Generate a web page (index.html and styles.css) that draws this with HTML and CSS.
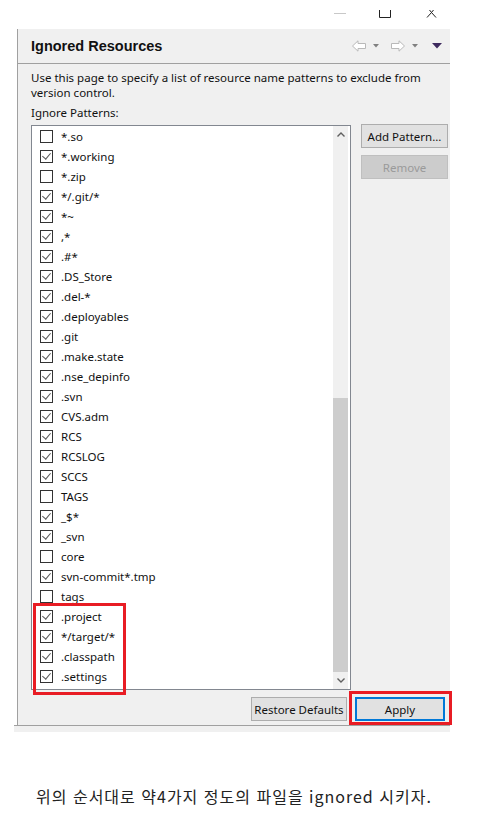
FILE: index.html
```html
<!DOCTYPE html>
<html lang="ko">
<head>
<meta charset="utf-8">
<title>Ignored Resources</title>
<link rel="stylesheet" href="styles.css">
</head>
<body>
<div class="titlebar">
  <svg class="winctl" width="120" height="29" viewBox="0 0 120 29">
    <line x1="0" y1="13.5" x2="12" y2="13.5" stroke="#c8c8c8" stroke-width="1"/>
    <polyline points="45.5,10 45.5,17.5 56.5,17.5 56.5,10" fill="none" stroke="#222" stroke-width="1"/>
    <path d="M93,17.5 L97.5,12.5 L102,17.5 M95.5,10 L97.5,12.5 L99.5,10" fill="none" stroke="#222" stroke-width="1"/>
  </svg>
</div>
<div class="page">
  <div class="panel">
    <div class="header">
      <h1 class="title">Ignored Resources</h1>
      <div class="nav">
        <svg width="14" height="12" viewBox="0 0 14 12"><path d="M0.5,6 L6,0.8 L6,3.5 L13.5,3.5 L13.5,8.5 L6,8.5 L6,11.2 Z" fill="#fff" stroke="#b9b9b9" stroke-width="1"/></svg>
        <svg class="tri" width="6" height="4" viewBox="0 0 6 4"><path d="M0,0 L6,0 L3,3.5 Z" fill="#808080"/></svg>
        <svg width="14" height="12" viewBox="0 0 14 12"><path d="M13.5,6 L8,0.8 L8,3.5 L0.5,3.5 L0.5,8.5 L8,8.5 L8,11.2 Z" fill="#fff" stroke="#b9b9b9" stroke-width="1"/></svg>
        <svg class="tri" width="6" height="4" viewBox="0 0 6 4"><path d="M0,0 L6,0 L3,3.5 Z" fill="#808080"/></svg>
        <svg class="tri big" width="10" height="6" viewBox="0 0 10 6"><path d="M0,0 L10,0 L5,5.5 Z" fill="#3d2a5e"/></svg>
      </div>
    </div>
    <div class="body">
      <p class="desc">Use this page to specify a list of resource name patterns to exclude from version control.</p>
      <div class="label">Ignore Patterns:</div>
      <div class="main">
        <div class="listbox">
          <div class="rows">
            <div class="row"><span class="cb"></span><span>*.so</span></div>
            <div class="row"><span class="cb on"></span><span>*.working</span></div>
            <div class="row"><span class="cb"></span><span>*.zip</span></div>
            <div class="row"><span class="cb on"></span><span>*/.git/*</span></div>
            <div class="row"><span class="cb on"></span><span>*~</span></div>
            <div class="row"><span class="cb on"></span><span>,*</span></div>
            <div class="row"><span class="cb on"></span><span>.#*</span></div>
            <div class="row"><span class="cb on"></span><span>.DS_Store</span></div>
            <div class="row"><span class="cb on"></span><span>.del-*</span></div>
            <div class="row"><span class="cb on"></span><span>.deployables</span></div>
            <div class="row"><span class="cb on"></span><span>.git</span></div>
            <div class="row"><span class="cb on"></span><span>.make.state</span></div>
            <div class="row"><span class="cb on"></span><span>.nse_depinfo</span></div>
            <div class="row"><span class="cb on"></span><span>.svn</span></div>
            <div class="row"><span class="cb on"></span><span>CVS.adm</span></div>
            <div class="row"><span class="cb on"></span><span>RCS</span></div>
            <div class="row"><span class="cb on"></span><span>RCSLOG</span></div>
            <div class="row"><span class="cb on"></span><span>SCCS</span></div>
            <div class="row"><span class="cb"></span><span>TAGS</span></div>
            <div class="row"><span class="cb on"></span><span>_$*</span></div>
            <div class="row"><span class="cb on"></span><span>_svn</span></div>
            <div class="row"><span class="cb"></span><span>core</span></div>
            <div class="row"><span class="cb on"></span><span>svn-commit*.tmp</span></div>
            <div class="row"><span class="cb"></span><span>tags</span></div>
            <div class="marked">
              <div class="row"><span class="cb on"></span><span>.project</span></div>
              <div class="row"><span class="cb on"></span><span>*/target/*</span></div>
              <div class="row"><span class="cb on"></span><span>.classpath</span></div>
              <div class="row"><span class="cb on"></span><span>.settings</span></div>
            </div>
          </div>
          <div class="scrollbar">
            <div class="sb-btn"><svg width="8" height="5" viewBox="0 0 8 5"><path d="M0.5,4.5 L4,1 L7.5,4.5" fill="none" stroke="#606060" stroke-width="1.4"/></svg></div>
            <div class="sb-track"><div class="sb-thumb"></div></div>
            <div class="sb-btn"><svg width="8" height="5" viewBox="0 0 8 5"><path d="M0.5,0.5 L4,4 L7.5,0.5" fill="none" stroke="#606060" stroke-width="1.4"/></svg></div>
          </div>
        </div>
        <div class="side">
          <button class="btn">Add Pattern...</button>
          <button class="btn" disabled>Remove</button>
        </div>
      </div>
      <div class="footer">
        <button class="btn restore">Restore Defaults</button>
        <div class="apply-wrap"><button class="btn apply">Apply</button></div>
      </div>
    </div>
  </div>
  <div class="band"></div>
</div>
<p class="caption">위의 순서대로 약4가지 정도의 파일을 ignored 시키자.</p>
</body>
</html>
```
FILE: styles.css
```css
* { box-sizing: border-box; }
html, body { margin: 0; padding: 0; background: #fff; }
body {
  width: 479px;
  font-family: "Noto Sans", "Noto Sans CJK KR", sans-serif;
  font-size: 11.5px;
  color: #000;
}
.titlebar {
  height: 29px;
  display: flex;
  justify-content: flex-end;
  padding-right: 25px;
}
.winctl { display: block; }
.page {
  padding-left: 14px;
  width: 450px;
}
.panel {
  margin-left: 3px;
  border-left: 1px solid #a0a0a0;
  background: #f0f0f0;
}
.header {
  height: 35px;
  border-bottom: 1px solid #a0a0a0;
  display: flex;
  align-items: center;
  justify-content: space-between;
  padding: 0 8px 0 13px;
}
.title {
  margin: 0;
  font-family: "Liberation Sans", sans-serif;
  font-size: 14.5px;
  font-weight: bold;
  color: #111;
}
.nav {
  display: flex;
  align-items: center;
  gap: 7px;
}
.nav svg { display: block; }
.nav .tri { margin-right: 5px; }
.nav .big { margin-right: 0; margin-left: 2px; }
.body {
  padding: 6px 2px 4px 13px;
}
.desc {
  margin: 0;
  line-height: 15px;
  color: #111;
}
.label {
  margin-top: 5px;
  line-height: 15px;
  color: #111;
}
.main {
  margin-top: 5px;
  display: flex;
  gap: 10px;
  align-items: flex-start;
}
.listbox {
  width: 320px;
  height: 565px;
  border: 1px solid #828790;
  background: #fff;
  display: flex;
}
.rows {
  flex: 1;
  padding-top: 0;
}
.row {
  height: 20px;
  display: flex;
  align-items: center;
  padding-left: 8px;
  gap: 8px;
  color: #111;
  white-space: nowrap;
}
.cb {
  width: 13px;
  height: 13px;
  border: 1px solid #333;
  background: #fff;
  flex: none;
  position: relative;
}
.cb.on::after {
  content: "";
  position: absolute;
  left: 3px;
  top: 0px;
  width: 4px;
  height: 7px;
  border-right: 1px solid #555;
  border-bottom: 1px solid #555;
  transform: rotate(40deg);
}
.marked {
  position: relative;
}
.marked::before {
  content: "";
  position: absolute;
  left: 1px;
  top: -3px;
  width: 87px;
  height: 86px;
  border: 3px solid #e81c24;
}
.scrollbar {
  width: 15px;
  margin-right: 2px;
  background: #f0f0f0;
  display: flex;
  flex-direction: column;
}
.sb-btn {
  height: 17px;
  display: flex;
  align-items: center;
  justify-content: center;
}
.sb-track {
  flex: 1;
  padding-top: 255px;
}
.sb-thumb {
  height: 274px;
  background: #cdcdcd;
}
.side {
  width: 87px;
  display: flex;
  flex-direction: column;
  gap: 7px;
  margin-top: -1px;
}
.btn {
  font-family: inherit;
  font-size: 11.5px;
  height: 24px;
  padding: 0;
  background: #e1e1e1;
  border: 1px solid #adadad;
  color: #111;
  border-radius: 0;
  white-space: nowrap;
}
.btn[disabled] {
  background: #cccccc;
  border-color: #bfbfbf;
  color: #9a9a9a;
}
.footer {
  margin-top: 7px;
  display: flex;
  justify-content: flex-end;
  gap: 8px;
  padding-right: 3px;
}
.restore { width: 96px; }
.apply-wrap { position: relative; }
.apply-wrap::before {
  content: "";
  position: absolute;
  left: -6px;
  top: -6px;
  right: -7px;
  bottom: -4px;
  border: 3px solid #e81c24;
}
.apply {
  width: 90px;
  border: 2px solid #0078d7;
  display: block;
}
.band {
  height: 7px;
  border-top: 1px solid #a0a0a0;
  background: #f0f0f0;
}
.caption {
  margin: 52px 0 0 36px;
  font-family: "Noto Sans CJK KR", sans-serif;
  font-size: 16px;
  line-height: 24px;
  letter-spacing: 1px;
  color: #222;
}
```
